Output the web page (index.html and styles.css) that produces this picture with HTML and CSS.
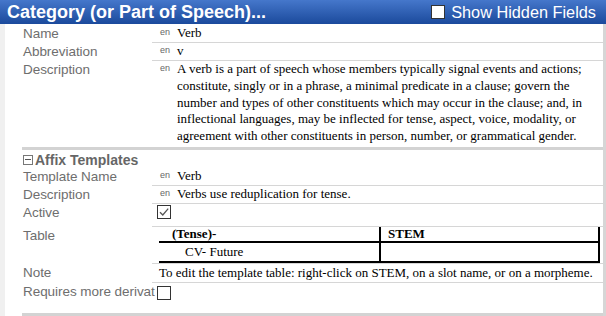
FILE: index.html
```html
<!doctype html>
<html lang="en">
<head>
    <meta charset="UTF-8">
    <title>Category</title>
    <link rel="stylesheet" href="styles.css">
</head>
<body>
<div id="page">
    <div class="header">
        <span class="header-title">Category (or Part of Speech)...</span>
        <label class="header-toggle"><span class="box"></span>Show Hidden Fields</label>
    </div>
    <div class="content">
        <div class="row">
            <span class="label">Name</span>
            <div class="value"><span class="ws">en</span><span class="text">Verb</span></div>
        </div>
        <div class="row">
            <span class="label">Abbreviation</span>
            <div class="value"><span class="ws">en</span><span class="text">v</span></div>
        </div>
        <div class="row">
            <span class="label">Description</span>
            <div class="value last"><span class="ws">en</span><span class="text">A verb is a part of speech whose members typically signal events and actions; constitute, singly or in a phrase, a minimal predicate in a clause; govern the number and types of other constituents which may occur in the clause; and, in inflectional languages, may be inflected for tense, aspect, voice, modality, or agreement with other constituents in person, number, or grammatical gender.</span></div>
        </div>

        <div class="section">
            <div class="section-title"><span class="collapse"></span>Affix Templates</div>
            <div class="row">
                <span class="label">Template Name</span>
                <div class="value"><span class="ws">en</span><span class="text">Verb</span></div>
            </div>
            <div class="row">
                <span class="label">Description</span>
                <div class="value"><span class="ws">en</span><span class="text">Verbs use reduplication for tense.</span></div>
            </div>
            <div class="row">
                <span class="label">Active</span>
                <div class="value check-cell">
                    <span class="check">
                        <svg width="12" height="12" viewBox="0 0 12 12"><path d="M2 6.2 L4.8 9 L10.2 2.6" fill="none" stroke="#555" stroke-width="1.3"/></svg>
                    </span>
                </div>
            </div>
            <div class="row">
                <span class="label">Table</span>
                <div class="value table-cell">
                    <table class="slots">
                        <tr><th class="first">(Tense)-</th><th>STEM</th></tr>
                        <tr><td class="first">CV- Future</td><td></td></tr>
                    </table>
                </div>
            </div>
            <div class="row">
                <span class="label">Note</span>
                <div class="value"><span class="text plain">To edit the template table: right-click on STEM, on a slot name, or on a morpheme.</span></div>
            </div>
            <div class="row">
                <span class="label">Requires more derivat</span>
                <div class="value last check-cell"><span class="check"></span></div>
            </div>
        </div>
    </div>
</div>
</body>
</html>
```

FILE: styles.css
```css
body {
    margin: 0;
    background: #fff;
}

#page {
    width: 606px;
    height: 316px;
    overflow: hidden;
    display: flex;
    flex-direction: column;
}

.header {
    height: 24px;
    flex: none;
    display: flex;
    align-items: center;
    justify-content: space-between;
    padding: 0 10px 0 7px;
    background: linear-gradient(#4577cb, #1b4a9c);
    color: #fff;
    font-family: "Liberation Sans", Arial, sans-serif;
}

.header-title {
    font-size: 18px;
    font-weight: bold;
}

.header-toggle {
    display: flex;
    align-items: center;
    font-size: 16.3px;
}

.header-toggle .box {
    width: 12px;
    height: 12px;
    border: 1px solid #333;
    background: #fff;
    margin-right: 6px;
}

.content {
    flex: 1;
    min-height: 0;
    border-left: 5px solid #f0f0f0;
    border-right: 3px solid #d6d6d6;
    padding-left: 17px;
    padding-top: 1px;
}

.row {
    display: grid;
    grid-template-columns: 130px 1fr;
}

.label {
    font-family: "Liberation Sans", Arial, sans-serif;
    font-size: 13.5px;
    color: #6e6e6e;
    line-height: 17px;
    padding-left: 1px;
    white-space: nowrap;
    letter-spacing: -0.05px;
}

.value {
    display: flex;
    align-items: flex-start;
    border-bottom: 1px solid #d6d6d6;
    min-height: 17px;
}

.value.last {
    border-bottom: none;
}

.ws {
    flex: none;
    width: 25px;
    padding-left: 8px;
    box-sizing: border-box;
    font-family: "Liberation Sans", Arial, sans-serif;
    font-size: 9px;
    color: #666;
    line-height: 14px;
}

.text {
    font-family: "Liberation Serif", "Times New Roman", serif;
    font-size: 13px;
    line-height: 16.8px;
    color: #000;
    padding-right: 6px;
}

.text.plain {
    padding-left: 7px;
    line-height: 18px;
}

.section {
    margin-top: 2px;
    border-top: 3px solid #d3d3d3;
    border-bottom: 3px solid #d3d3d3;
    padding-bottom: 6px;
}

.section-title {
    display: flex;
    align-items: center;
    font-family: "Liberation Sans", Arial, sans-serif;
    font-size: 14px;
    font-weight: bold;
    color: #666;
    height: 16px;
    padding-top: 2px;
}

.collapse {
    width: 8px;
    height: 8px;
    border: 1px solid #777;
    margin: 0 2px 0 1px;
    position: relative;
}

.collapse::after {
    content: "";
    position: absolute;
    left: 1px;
    right: 1px;
    top: 3.5px;
    height: 1px;
    background: #555;
}

.check-cell {
    padding: 1px 0 4px 5px;
}

.check-cell.last {
    padding-top: 3px;
}

.check {
    display: block;
    width: 12px;
    height: 12px;
    border: 1px solid #333;
    background: #fff;
}

.check svg {
    display: block;
}

.table-cell {
    padding: 0 3px 0 7px;
}

.slots {
    width: 100%;
    border-collapse: collapse;
    font-family: "Liberation Serif", "Times New Roman", serif;
    font-size: 13px;
    border-right: 2px solid #000;
    border-bottom: 2px solid #000;
}

.slots th {
    text-align: left;
    height: 14px;
    line-height: 14px;
    padding: 0 0 0 7px;
    border-bottom: 2px solid #000;
}

.slots td {
    height: 18px;
    padding: 0 0 0 7px;
}

.slots .first {
    box-sizing: border-box;
    width: 221px;
    border-right: 2px solid #000;
    padding-left: 13px;
}

.slots td.first {
    padding-left: 26px;
}
```
